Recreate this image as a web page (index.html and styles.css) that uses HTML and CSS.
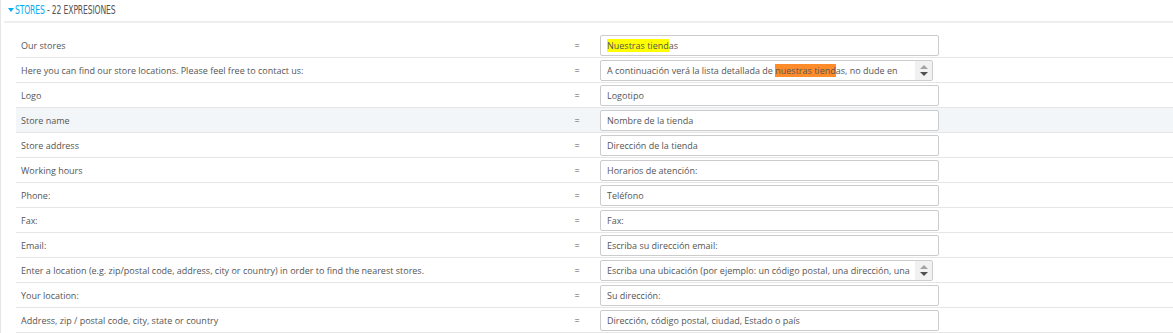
FILE: index.html
```
<!DOCTYPE html>
<html lang="es">
<head>
    <meta charset="UTF-8">
    <title>Traducciones - Stores</title>
    <link rel="stylesheet" href="styles.css">
</head>
<body>
    <div class="panel">
        <div class="panel-heading">
            <span class="caret"></span><span class="title"><span class="module">Stores</span> - 22 expresiones</span>
        </div>
        <div class="table">
            <div class="row">
                <div class="key">Our stores</div>
                <div class="eq">=</div>
                <div class="val"><div class="field"><span class="hl-yellow">Nuestras tiend</span>as</div></div>
            </div>
            <div class="row">
                <div class="key">Here you can find our store locations. Please feel free to contact us:</div>
                <div class="eq">=</div>
                <div class="val">
                    <div class="field area">
                        <div class="area-text">A continuación verá la lista detallada de <span class="hl-orange">nuestras tiend</span>as, no dude en<br>ponerse en contacto con nosotros:</div>
                        <div class="scroll"><span class="up"></span><span class="down"></span></div>
                    </div>
                </div>
            </div>
            <div class="row">
                <div class="key">Logo</div>
                <div class="eq">=</div>
                <div class="val"><div class="field">Logotipo</div></div>
            </div>
            <div class="row hover">
                <div class="key">Store name</div>
                <div class="eq">=</div>
                <div class="val"><div class="field">Nombre de la tienda</div></div>
            </div>
            <div class="row">
                <div class="key">Store address</div>
                <div class="eq">=</div>
                <div class="val"><div class="field">Dirección de la tienda</div></div>
            </div>
            <div class="row">
                <div class="key">Working hours</div>
                <div class="eq">=</div>
                <div class="val"><div class="field">Horarios de atención:</div></div>
            </div>
            <div class="row">
                <div class="key">Phone:</div>
                <div class="eq">=</div>
                <div class="val"><div class="field">Teléfono</div></div>
            </div>
            <div class="row">
                <div class="key">Fax:</div>
                <div class="eq">=</div>
                <div class="val"><div class="field">Fax:</div></div>
            </div>
            <div class="row">
                <div class="key">Email:</div>
                <div class="eq">=</div>
                <div class="val"><div class="field">Escriba su dirección email:</div></div>
            </div>
            <div class="row">
                <div class="key">Enter a location (e.g. zip/postal code, address, city or country) in order to find the nearest stores.</div>
                <div class="eq">=</div>
                <div class="val">
                    <div class="field area">
                        <div class="area-text">Escriba una ubicación (por ejemplo: un código postal, una dirección, una<br>ciudad o un país) para encontrar las tiendas más cercanas.</div>
                        <div class="scroll"><span class="up"></span><span class="down"></span></div>
                    </div>
                </div>
            </div>
            <div class="row">
                <div class="key">Your location:</div>
                <div class="eq">=</div>
                <div class="val"><div class="field">Su dirección:</div></div>
            </div>
            <div class="row">
                <div class="key">Address, zip / postal code, city, state or country</div>
                <div class="eq">=</div>
                <div class="val"><div class="field">Dirección, código postal, ciudad, Estado o país</div></div>
            </div>
        </div>
    </div>
</body>
</html>
```

FILE: styles.css
```
body {
    margin: 0;
    background: #fff;
    font-family: 'Open Sans', sans-serif;
    font-size: 9px;
    color: #555;
    overflow: hidden;
}

.panel {
    border-left: 1px solid #e6e6e6;
    height: 333px;
}

.panel-heading {
    margin-left: 3px;
    height: 21px;
    line-height: 21px;
    padding-left: 4px;
    border-bottom: 2px solid #eee;
    font-family: 'DejaVu Sans Condensed', 'DejaVu Sans', sans-serif;
    font-size: 11.5px;
    text-transform: uppercase;
    color: #555;
    white-space: nowrap;
}

.title {
    display: inline-block;
    transform: scaleX(0.74);
    transform-origin: left center;
    letter-spacing: -0.2px;
}

.caret {
    display: inline-block;
    width: 0;
    height: 0;
    border-left: 3px solid transparent;
    border-right: 3px solid transparent;
    border-top: 4px solid #00aff0;
    margin-right: 1px;
    vertical-align: 2px;
}

.module {
    color: #00aff0;
}

.table {
    margin: 10px 0 0 15px;
}

.row {
    display: grid;
    grid-template-columns: 545px 32px 1fr;
    align-items: center;
    height: 24px;
    border-bottom: 1px solid #e6e6e6;
}

.row.hover {
    background: #f3f6f9;
}

.key {
    padding-left: 5px;
    white-space: nowrap;
}

.eq {
    text-align: center;
}

.val {
    padding-left: 7px;
}

.field {
    width: 325px;
    height: 19px;
    line-height: 19px;
    padding: 0 6px;
    border: 1px solid #ccc;
    border-radius: 2px;
    background: #fff;
    white-space: nowrap;
    overflow: hidden;
}

.field.area {
    display: flex;
    padding-right: 0;
}

.area-text {
    flex: 1;
    overflow: hidden;
    line-height: 15px;
    padding-top: 2px;
}

.scroll {
    width: 17px;
    background: #f1f1f1;
    display: flex;
    flex-direction: column;
    align-items: center;
    justify-content: center;
    gap: 3px;
}

.up, .down {
    width: 0;
    height: 0;
    border-left: 4px solid transparent;
    border-right: 4px solid transparent;
}

.up {
    border-bottom: 4px solid #a3a3a3;
}

.down {
    border-top: 4px solid #505050;
}

.hl-yellow {
    background: #ffff00;
}

.hl-orange {
    background: #ff8c2a;
}
```
